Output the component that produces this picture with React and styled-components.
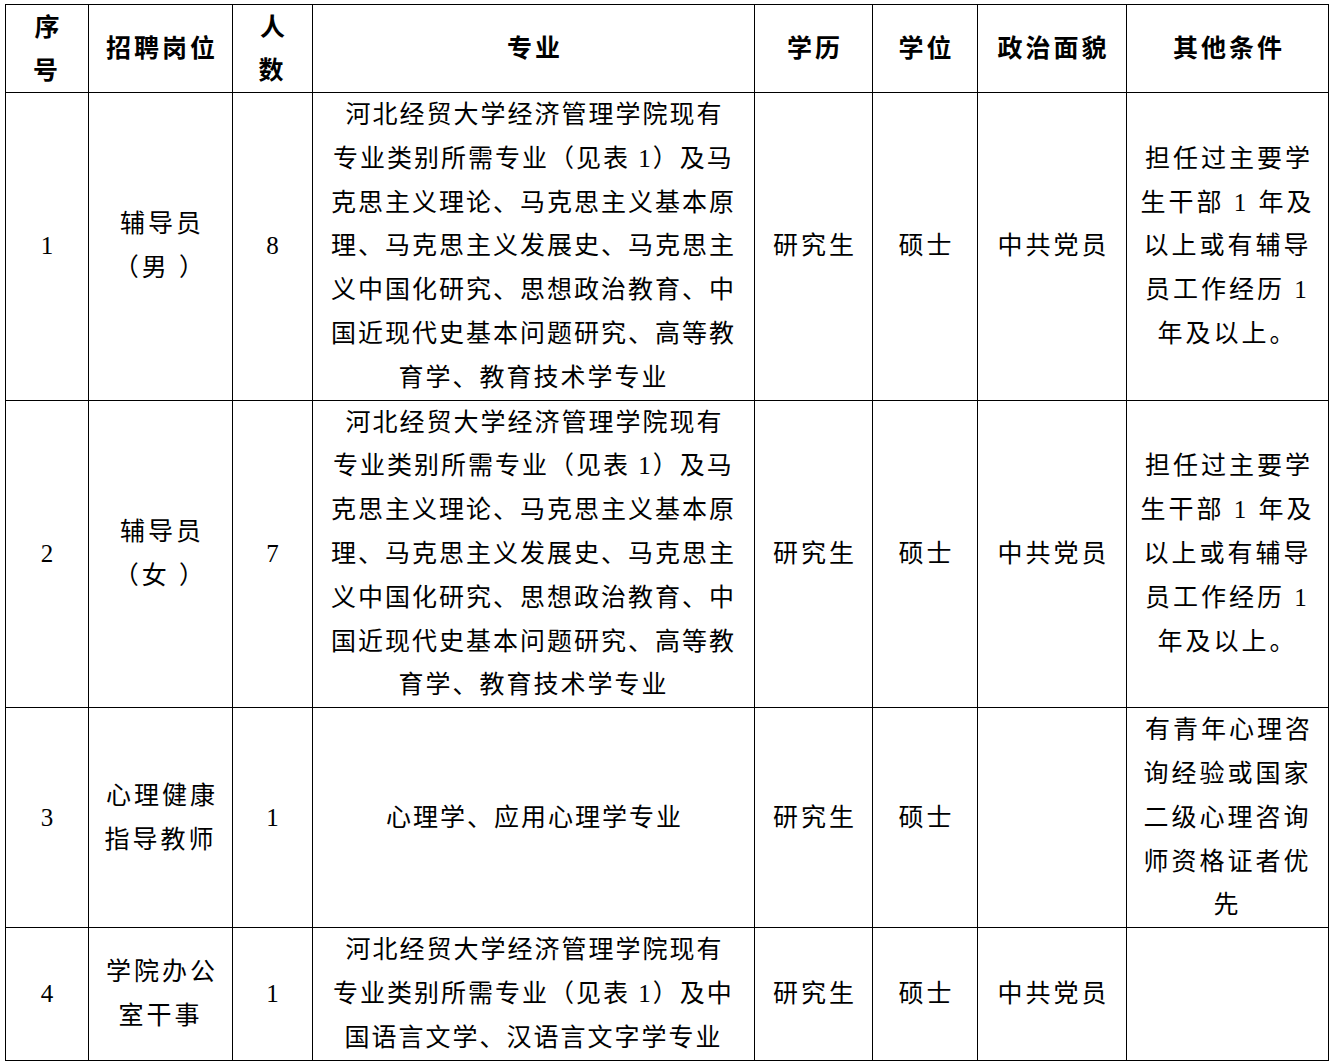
import React from "react";
import styled, { createGlobalStyle } from "styled-components";

const GlobalStyle = createGlobalStyle`
  html, body {
    margin: 0;
    padding: 0;
    background: #fff;
  }
`;

const Pagina = styled.div`
  padding: 4px 0 0 5px;
  font-family: "Liberation Serif", "Noto Sans CJK SC", serif;
  color: #000;
`;

const Tabla = styled.table`
  border-collapse: collapse;
  table-layout: fixed;
  width: 1323px;

  td,
  th {
    border: 1px solid #000;
    padding: 0;
    text-align: center;
    vertical-align: middle;
  }
`;

const Encabezado = styled.th`
  height: 87px;
  font-size: 25px;
  font-weight: 700;
  line-height: 43px;
  letter-spacing: 3px;
  text-indent: 3px;
`;

const Celda = styled.td`
  font-size: 25px;
  font-weight: 400;
  line-height: 43.8px;
  letter-spacing: ${(p) => (p.$apretado ? "2px" : "3px")};
  text-indent: ${(p) => (p.$apretado ? "2px" : "3px")};
  white-space: nowrap;
`;

const anchos = [83, 144, 80, 442, 118, 105, 149, 202];

const encabezados = [
  ["序", "号"],
  ["招聘岗位"],
  ["人", "数"],
  ["专业"],
  ["学历"],
  ["学位"],
  ["政治面貌"],
  ["其他条件"],
];

const especialidadLarga = [
  "河北经贸大学经济管理学院现有",
  "专业类别所需专业（见表 1）及马",
  "克思主义理论、马克思主义基本原",
  "理、马克思主义发展史、马克思主",
  "义中国化研究、思想政治教育、中",
  "国近现代史基本问题研究、高等教",
  "育学、教育技术学专业",
];

const requisitoDirigente = [
  "担任过主要学",
  "生干部 1 年及",
  "以上或有辅导",
  "员工作经历 1",
  "年及以上。",
];

const filas = [
  {
    num: "1",
    puesto: ["辅导员", "（男 ）"],
    personas: "8",
    especialidad: especialidadLarga,
    estudios: "研究生",
    titulo: "硕士",
    politica: "中共党员",
    otros: requisitoDirigente,
  },
  {
    num: "2",
    puesto: ["辅导员", "（女 ）"],
    personas: "7",
    especialidad: especialidadLarga,
    estudios: "研究生",
    titulo: "硕士",
    politica: "中共党员",
    otros: requisitoDirigente,
  },
  {
    num: "3",
    puesto: ["心理健康", "指导教师"],
    personas: "1",
    especialidad: ["心理学、应用心理学专业"],
    estudios: "研究生",
    titulo: "硕士",
    politica: "",
    otros: [
      "有青年心理咨",
      "询经验或国家",
      "二级心理咨询",
      "师资格证者优",
      "先",
    ],
  },
  {
    num: "4",
    puesto: ["学院办公", "室干事"],
    personas: "1",
    especialidad: [
      "河北经贸大学经济管理学院现有",
      "专业类别所需专业（见表 1）及中",
      "国语言文学、汉语言文字学专业",
    ],
    estudios: "研究生",
    titulo: "硕士",
    politica: "中共党员",
    otros: [],
  },
];

const Lineas = ({ lista }) =>
  lista.map((linea, i) => (
    <React.Fragment key={i}>
      {i > 0 && <br />}
      {linea}
    </React.Fragment>
  ));

const App = () => {
  return (
    <Pagina>
      <GlobalStyle />
      <Tabla>
        <colgroup>
          {anchos.map((w, i) => (
            <col key={i} style={{ width: w }} />
          ))}
        </colgroup>
        <thead>
          <tr>
            {encabezados.map((h, i) => (
              <Encabezado key={i}>
                <Lineas lista={h} />
              </Encabezado>
            ))}
          </tr>
        </thead>
        <tbody>
          {filas.map((f) => (
            <tr key={f.num}>
              <Celda>{f.num}</Celda>
              <Celda>
                <Lineas lista={f.puesto} />
              </Celda>
              <Celda>{f.personas}</Celda>
              <Celda $apretado>
                <Lineas lista={f.especialidad} />
              </Celda>
              <Celda>{f.estudios}</Celda>
              <Celda>{f.titulo}</Celda>
              <Celda>{f.politica}</Celda>
              <Celda>
                <Lineas lista={f.otros} />
              </Celda>
            </tr>
          ))}
        </tbody>
      </Tabla>
    </Pagina>
  );
};

export default App;
